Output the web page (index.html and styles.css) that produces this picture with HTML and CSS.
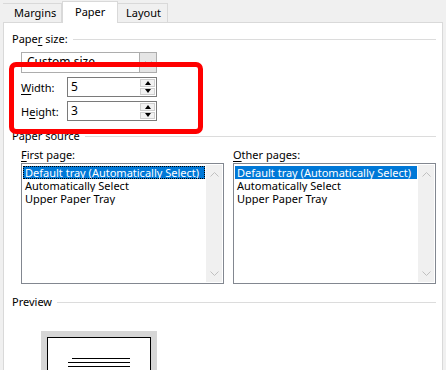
FILE: index.html
```html
<!DOCTYPE html>
<html lang="en">

<head>
    <meta charset="UTF-8">
    <title>Page Setup</title>
    <link rel="stylesheet" href="styles.css">
</head>

<body>
    <div class="tabs">
        <div class="tab tab-margins">Margins</div>
        <div class="tab tab-paper active">Paper</div>
        <div class="tab tab-layout">Layout</div>
    </div>

    <div class="panel">
        <div class="group-title"><span>Pape<u>r</u> size:</span></div>
        <div class="size-block">
            <div class="select">
                <span class="select-text">Custom size</span>
                <span class="select-btn">
                    <svg width="7" height="4" viewBox="0 0 7 4"><path d="M0.5 0.5 L3.5 3.5 L6.5 0.5" fill="none" stroke="#a0a0a0"/></svg>
                </span>
            </div>
            <div class="field-row">
                <label><u>W</u>idth:</label>
                <div class="spin-input">
                    <span class="value">5</span>
                    <span class="spin">
                        <span class="spin-btn"><i class="tri-up"></i></span>
                        <span class="spin-btn"><i class="tri-down"></i></span>
                    </span>
                </div>
            </div>
            <div class="field-row">
                <label>H<u>e</u>ight:</label>
                <div class="spin-input">
                    <span class="value">3</span>
                    <span class="spin">
                        <span class="spin-btn"><i class="tri-up"></i></span>
                        <span class="spin-btn"><i class="tri-down"></i></span>
                    </span>
                </div>
            </div>
            <!-- highlight drawn over the size fields -->
            <div class="highlight"></div>
        </div>

        <div class="group-title source-title"><span>Paper source</span></div>
        <div class="source-block">
            <div class="source-col">
                <div class="list-label"><u>F</u>irst page:</div>
                <div class="listbox">
                    <ul class="items">
                        <li class="selected focused">Default tray (Automatically Select)</li>
                        <li>Automatically Select</li>
                        <li>Upper Paper Tray</li>
                    </ul>
                    <div class="scrollbar">
                        <svg width="9" height="5" viewBox="0 0 9 5"><path d="M0.5 4.5 L4.5 0.5 L8.5 4.5" fill="none" stroke="#c0c0c0"/></svg>
                        <svg width="9" height="5" viewBox="0 0 9 5"><path d="M0.5 0.5 L4.5 4.5 L8.5 0.5" fill="none" stroke="#c0c0c0"/></svg>
                    </div>
                </div>
            </div>
            <div class="source-col">
                <div class="list-label"><u>O</u>ther pages:</div>
                <div class="listbox">
                    <ul class="items">
                        <li class="selected">Default tray (Automatically Select)</li>
                        <li>Automatically Select</li>
                        <li>Upper Paper Tray</li>
                    </ul>
                    <div class="scrollbar">
                        <svg width="9" height="5" viewBox="0 0 9 5"><path d="M0.5 4.5 L4.5 0.5 L8.5 4.5" fill="none" stroke="#c0c0c0"/></svg>
                        <svg width="9" height="5" viewBox="0 0 9 5"><path d="M0.5 0.5 L4.5 4.5 L8.5 0.5" fill="none" stroke="#c0c0c0"/></svg>
                    </div>
                </div>
            </div>
        </div>

        <div class="group-title preview-title"><span>Preview</span></div>
        <div class="preview">
            <div class="page">
                <div class="text-lines">
                    <span class="ln short"></span>
                    <span class="ln"></span>
                    <span class="ln"></span>
                </div>
            </div>
        </div>
    </div>
</body>

</html>
```

FILE: styles.css
```css
body {
    margin: 0;
    background-color: #f0f0f0;
    font-family: "Noto Sans", "Open Sans", sans-serif;
    font-size: 11px;
    color: #000;
    width: 446px;
    height: 370px;
    overflow: hidden;
}

u {
    text-decoration-thickness: 1px;
    text-underline-offset: 2px;
}

/* tabs */
.tabs {
    display: flex;
    align-items: flex-end;
    padding: 1px 0 0 3px;
    height: 21px;
}

.tab {
    box-sizing: border-box;
    height: 19px;
    line-height: 17px;
    border: 1px solid #d9d9d9;
    border-bottom: none;
    border-left: none;
    background-color: #f0f0f0;
}

.tab-margins {
    width: 59px;
    padding-left: 11px;
}

.tab-paper {
    width: 56px;
    padding-left: 12px;
}

.tab-layout {
    width: 50px;
    padding-left: 8px;
}

.tab.active {
    height: 22px;
    margin-bottom: -1px;
    background-color: #fff;
    border-left: 1px solid #d9d9d9;
    line-height: 19px;
}

.panel {
    margin-left: 3px;
    width: 440px;
    height: 348px;
    background-color: #fff;
    border: 1px solid #d9d9d9;
    border-bottom: none;
    padding: 8px 0 0 8px;
    box-sizing: border-box;
    overflow: hidden;
}

/* group headers with a rule after the text */
.group-title {
    display: flex;
    align-items: center;
    gap: 5px;
    height: 16px;
    line-height: 16px;
    margin-right: 6px;
}

.group-title::after {
    content: "";
    flex: 1;
    height: 1px;
    background-color: #dcdcdc;
}

/* paper size */
.size-block {
    position: relative;
    padding: 5px 0 0 9px;
}

.select {
    display: flex;
    box-sizing: border-box;
    width: 136px;
    height: 21px;
    border: 1px solid #adadad;
    background-color: #fff;
}

.select-text {
    flex: 1;
    padding: 1px 0 0 5px;
    line-height: 16px;
    font-size: 12px;
}

.select-btn {
    width: 16px;
    background-color: #e5e5e5;
    border-left: 1px solid #adadad;
    display: flex;
    align-items: center;
    justify-content: center;
}

.field-row {
    display: flex;
    align-items: center;
    margin-top: 4px;
}

.field-row label {
    width: 46px;
}

.spin-input {
    display: flex;
    box-sizing: border-box;
    width: 90px;
    height: 20px;
    border: 1px solid #7a7a7a;
}

.spin-input .value {
    flex: 1;
    padding-left: 3px;
    line-height: 18px;
    font-size: 12px;
}

.spin {
    display: flex;
    flex-direction: column;
    width: 16px;
    padding: 1px 1px 1px 0;
    gap: 1px;
    box-sizing: border-box;
}

.spin-btn {
    flex: 1;
    border: 1px solid #cfcfcf;
    background-color: #f2f2f2;
    display: flex;
    align-items: center;
    justify-content: center;
}

.tri-up,
.tri-down {
    width: 0;
    height: 0;
    border-left: 3.5px solid transparent;
    border-right: 3.5px solid transparent;
}

.tri-up {
    border-bottom: 4px solid #000;
}

.tri-down {
    border-top: 4px solid #000;
}

.highlight {
    position: absolute;
    left: -3px;
    top: 15px;
    width: 194px;
    height: 72px;
    box-sizing: border-box;
    border: 5px solid #ff0000;
    border-radius: 7px;
}

/* paper source */
.source-title {
    margin-top: 7px;
}

.source-block {
    display: flex;
    gap: 9px;
    padding: 3px 0 0 9px;
}

.list-label {
    line-height: 16px;
}

.listbox {
    display: flex;
    box-sizing: border-box;
    width: 203px;
    height: 121px;
    border: 1px solid #828790;
    background-color: #fff;
}

.items {
    flex: 1;
    list-style: none;
    margin: 0;
    padding: 2px 0 0 1px;
}

.items li {
    height: 13px;
    line-height: 13px;
    padding-left: 2px;
    white-space: nowrap;
    overflow: hidden;
}

.items li.selected {
    background-color: #0078d7;
    color: #fff;
    margin-right: 1px;
}

.items li.focused {
    outline: 1px dotted #000;
    outline-offset: -1px;
}

.scrollbar {
    width: 16px;
    margin: 1px 1px 1px 0;
    background-color: #f0f0f0;
    display: flex;
    flex-direction: column;
    justify-content: space-between;
    align-items: center;
    padding: 7px 0 6px;
    box-sizing: border-box;
}

/* preview */
.preview-title {
    margin-top: 10px;
}

.preview {
    padding: 21px 0 0 29px;
}

.page {
    width: 116px;
    height: 60px;
    box-sizing: border-box;
    padding: 6px 6px 0;
    background-color: #d6d6d6;
}

.text-lines {
    box-sizing: border-box;
    height: 60px;
    border: 1px solid #000;
    background-color: #fff;
    padding: 20px 0 0 20px;
    display: flex;
    flex-direction: column;
    gap: 3px;
}

.ln {
    display: block;
    width: 62px;
    height: 1px;
    background-color: #000;
}

.ln.short {
    width: 58px;
    margin-left: 4px;
}
```
